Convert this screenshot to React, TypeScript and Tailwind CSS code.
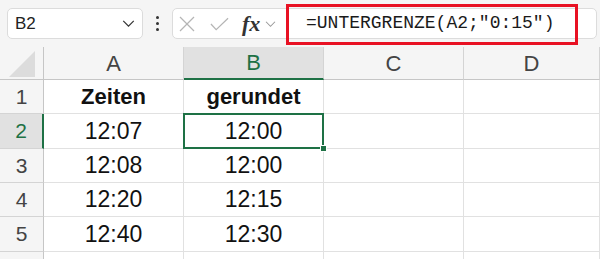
import React from 'react';

const cols = ['A', 'B', 'C', 'D'];
const colWidths = ['w-[140px]', 'w-[140px]', 'w-[140px]', 'flex-1'];
const rowHeights = ['h-[34px]', 'h-[35px]', 'h-[34px]', 'h-[34px]', 'h-[35px]', 'h-[20px]'];

const rows: string[][] = [
  ['Zeiten', 'gerundet', '', ''],
  ['12:07', '12:00', '', ''],
  ['12:08', '12:00', '', ''],
  ['12:20', '12:15', '', ''],
  ['12:40', '12:30', '', ''],
  ['', '', '', ''],
];

const Chevron: React.FC<{ className?: string }> = ({ className }) => (
  <svg viewBox="0 0 14 8" className={className} fill="none" stroke="currentColor" strokeWidth="1.4">
    <polyline points="1,1 7,7 13,1" />
  </svg>
);

const Toolbar: React.FC = () => (
  <div className="flex h-[47px] items-center bg-[#f5f5f5] pl-[7px] pr-[3px]">
    {/* name box */}
    <div className="flex h-[31px] w-[136px] items-center justify-between rounded-[5px] border border-[#dcdcdc] bg-white pl-[7px] pr-[7px]">
      <span className="text-[17px] text-[#222]">B2</span>
      <Chevron className="h-[7px] w-[13px] text-[#333]" />
    </div>

    {/* dots */}
    <div className="flex w-[29px] flex-col items-center gap-[3px]">
      <span className="h-[3px] w-[3px] rounded-full bg-[#333]" />
      <span className="h-[3px] w-[3px] rounded-full bg-[#333]" />
      <span className="h-[3px] w-[3px] rounded-full bg-[#333]" />
    </div>

    {/* formula bar */}
    <div className="flex h-[31px] flex-1 items-center rounded-[5px] border border-[#dcdcdc] bg-white">
      <div className="flex w-[113px] items-center pl-[6px]">
        <svg viewBox="0 0 16 16" className="h-[16px] w-[16px] text-[#b5b5b5]" fill="none" stroke="currentColor" strokeWidth="1.3">
          <line x1="1" y1="1" x2="15" y2="15" />
          <line x1="15" y1="1" x2="1" y2="15" />
        </svg>
        <svg viewBox="0 0 20 14" className="ml-[15px] h-[14px] w-[19px] text-[#b5b5b5]" fill="none" stroke="currentColor" strokeWidth="1.3">
          <polyline points="1,7 6.5,13 19,1" />
        </svg>
        <span
          className="ml-[13px] text-[22px] font-bold italic leading-none text-[#333]"
          style={{ fontFamily: '"Liberation Serif", "Times New Roman", serif' }}
        >
          fx
        </span>
        <Chevron className="ml-[5px] h-[6px] w-[11px] text-[#999]" />
      </div>

      {/* formula text with highlight */}
      <div className="relative flex h-full flex-1 items-center">
        <div className="pointer-events-none absolute -top-[5px] left-0 h-[41px] w-[292px] border-[3px] border-[#e81123]" />
        <span
          className="pl-[20px] text-[18px] text-[#1a1a1a]"
          style={{ fontFamily: '"Liberation Mono", "Courier New", monospace' }}
        >
          =UNTERGRENZE(A2;"0:15")
        </span>
      </div>
    </div>
  </div>
);

const App: React.FC = () => {
  return (
    <div className="h-[259px] w-[600px] overflow-hidden bg-white" style={{ fontFamily: '"Liberation Sans", Arial, sans-serif' }}>
      <Toolbar />

      {/* column headers */}
      <div className="flex h-[33px] bg-[#f5f5f5]">
        <div className="flex w-[44px] items-end justify-center border-r border-b border-[#c6c6c6] pb-[2px]">
          <svg viewBox="0 0 26 26" className="h-[26px] w-[26px]">
            <polygon points="26,0 26,26 0,26" fill="#dcdcdc" />
          </svg>
        </div>
        {cols.map((c, i) => (
          <div
            key={c}
            className={`flex items-center justify-center text-[22px] ${colWidths[i]} ${
              c === 'B'
                ? 'border-b-2 border-r border-b-[#1e7145] border-r-[#d4d4d4] bg-[#e1e1e1] text-[#1e7145]'
                : 'border-r border-b border-r-[#d4d4d4] border-b-[#c6c6c6] text-[#444]'
            }`}
          >
            {c}
          </div>
        ))}
      </div>

      {/* rows */}
      {rows.map((row, r) => (
        <div key={r} className={`flex ${rowHeights[r]}`}>
          <div
            className={`flex w-[44px] items-center justify-center text-[21px] ${
              r === 1
                ? 'border-r-2 border-b border-r-[#1e7145] border-b-[#d4d4d4] bg-[#e1e1e1] text-[#1e7145]'
                : 'border-r border-b border-r-[#c6c6c6] border-b-[#d4d4d4] bg-[#f5f5f5] text-[#444]'
            }`}
          >
            {r < 5 ? r + 1 : ''}
          </div>
          {row.map((v, c) => (
            <div
              key={c}
              className={`relative flex items-center justify-center border-r border-b border-[#e1e1e1] text-[#111] ${colWidths[c]} ${
                r === 0 ? 'text-[22px] font-bold' : 'text-[23px]'
              } ${r === 1 && c === 1 ? 'z-10' : ''}`}
            >
              {v}
              {r === 1 && c === 1 && (
                <>
                  <div className="pointer-events-none absolute -top-px -left-px -right-px -bottom-px border-2 border-[#1e7145]" />
                  <div className="absolute -right-[4px] -bottom-[4px] h-[7px] w-[7px] border border-white bg-[#1e7145]" />
                </>
              )}
            </div>
          ))}
        </div>
      ))}
    </div>
  );
};

export default App;
